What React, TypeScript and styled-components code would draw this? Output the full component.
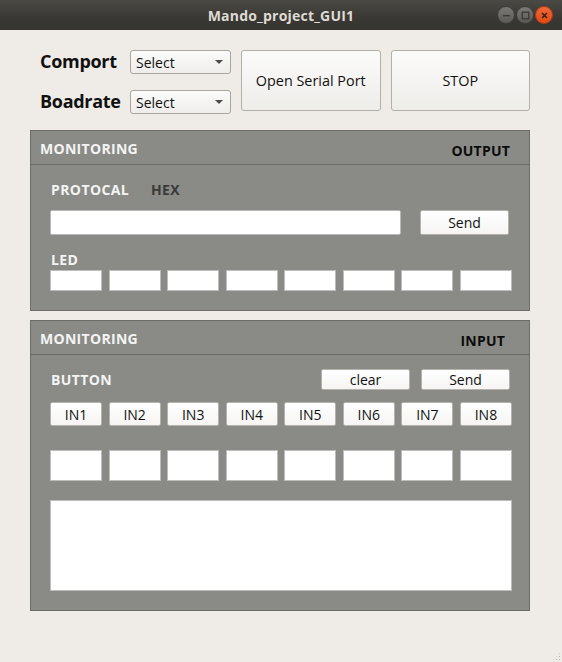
import React from "react";
import styled, { createGlobalStyle } from "styled-components";

const Global = createGlobalStyle`
  html, body { margin: 0; padding: 0; background: #efebe7; }
  body { font-family: "Open Sans", "DejaVu Sans", sans-serif; }
  * { box-sizing: border-box; }
`;

const Window = styled.div`
  width: 562px;
  height: 662px;
  background: #efebe7;
  display: flex;
  flex-direction: column;
  position: relative;
  overflow: hidden;
`;

const TitleBar = styled.div`
  height: 30px;
  flex: none;
  background: linear-gradient(#4a4944, #393834 60%, #353430);
  display: flex;
  align-items: center;
  justify-content: center;
  position: relative;
  color: #dfdbd2;
  font-weight: 700;
  font-size: 14px;
  letter-spacing: 0.2px;
`;

const WinButtons = styled.div`
  position: absolute;
  right: 9px;
  top: 6px;
  display: flex;
  gap: 1px;
`;

const WinBtn = styled.div<{ $close?: boolean }>`
  width: 18px;
  height: 18px;
  border-radius: 50%;
  background: ${(p) =>
    p.$close
      ? "linear-gradient(#f0683a, #df4b16)"
      : "linear-gradient(#7a7974, #5b5a56)"};
  border: 1px solid ${(p) => (p.$close ? "#b63c10" : "#3e3d3a")};
  display: flex;
  align-items: center;
  justify-content: center;
`;

const Content = styled.div`
  padding: 20px 32px 0 30px;
  display: flex;
  flex-direction: column;
`;

const TopRow = styled.div`
  display: flex;
  align-items: flex-start;
`;

const FormCol = styled.div`
  display: flex;
  flex-direction: column;
  gap: 16px;
  padding-left: 10px;
  padding-top: 0;
`;

const FormRow = styled.div`
  display: flex;
  align-items: center;
  height: 24px;
`;

const FieldLabel = styled.div`
  width: 90px;
  font-size: 18px;
  font-weight: 700;
  color: #111;
  letter-spacing: -0.3px;
  margin-top: -2px;
`;

const Combo = styled.div`
  width: 101px;
  height: 24px;
  border: 1px solid #a9a6a0;
  border-radius: 3px;
  background: linear-gradient(#fbfbfa, #efedeb);
  display: flex;
  align-items: center;
  justify-content: space-between;
  padding: 0 7px 0 5px;
  font-size: 14px;
  color: #111;
`;

const Arrow = styled.span`
  width: 0;
  height: 0;
  border-left: 4px solid transparent;
  border-right: 4px solid transparent;
  border-top: 4px solid #4c4c4c;
`;

const BigButton = styled.div`
  width: 141px;
  height: 61px;
  margin-left: 10px;
  border: 1px solid #b3b0aa;
  border-radius: 3px;
  background: linear-gradient(#fbfbfa, #efedea);
  display: flex;
  align-items: center;
  justify-content: center;
  font-size: 14.4px;
  color: #111;
`;

const Panel = styled.div<{ $mt: number; $h: number }>`
  margin-top: ${(p) => p.$mt}px;
  height: ${(p) => p.$h}px;
  background: #8a8b86;
  border: 1px solid #6c6d69;
  display: flex;
  flex-direction: column;
`;

const PanelHeader = styled.div<{ $pr: number }>`
  height: 34px;
  flex: none;
  border-bottom: 1px solid #6a6b67;
  display: flex;
  justify-content: space-between;
  padding: 0 ${(p) => p.$pr}px 0 9px;
`;

const HeaderTitle = styled.div`
  color: #f4f4f4;
  font-weight: 700;
  font-size: 14px;
  letter-spacing: 0.3px;
  padding-top: 8px;
`;

const HeaderTag = styled.div`
  color: #0c0c0c;
  font-weight: 700;
  font-size: 14px;
  letter-spacing: 0.2px;
  padding-top: 10px;
`;

const PanelBody = styled.div`
  padding: 0 19px 0 19px;
  display: flex;
  flex-direction: column;
`;

const SectionRow = styled.div<{ $mt: number }>`
  margin-top: ${(p) => p.$mt}px;
  display: flex;
  align-items: center;
  height: 20px;
`;

const SectionLabel = styled.div<{ $dark?: boolean; $w?: number }>`
  color: ${(p) => (p.$dark ? "#3a3a38" : "#f4f4f4")};
  font-weight: 700;
  font-size: 14px;
  letter-spacing: 0.4px;
  width: ${(p) => (p.$w ? `${p.$w}px` : "auto")};
  margin-left: 1px;
`;

const Spacer = styled.div`
  flex: 1;
`;

const InputRow = styled.div<{ $mt: number }>`
  margin-top: ${(p) => p.$mt}px;
  display: flex;
  align-items: center;
`;

const TextField = styled.div`
  width: 351px;
  height: 25px;
  background: #fff;
  border: 1px solid #b9b9b7;
  border-radius: 2px;
`;

const SmallButton = styled.div<{ $ml?: number; $h?: number }>`
  width: 89px;
  height: ${(p) => p.$h ?? 25}px;
  margin-left: ${(p) => p.$ml ?? 0}px;
  background: linear-gradient(#ffffff, #f6f5f4);
  border: 1px solid #b5b3ae;
  border-radius: 2px;
  display: flex;
  align-items: center;
  justify-content: center;
  font-size: 14px;
  color: #111;
`;

const Grid8 = styled.div<{ $mt: number }>`
  margin-top: ${(p) => p.$mt}px;
  width: 462px;
  display: grid;
  grid-template-columns: repeat(8, 1fr);
  column-gap: 6.4px;
`;

const Box = styled.div<{ $h: number }>`
  height: ${(p) => p.$h}px;
  background: #fff;
  border: 1px solid #bdbdbb;
`;

const InButton = styled.div`
  height: 24px;
  background: linear-gradient(#ffffff, #f6f5f4);
  border: 1px solid #b5b3ae;
  border-radius: 2px;
  display: flex;
  align-items: center;
  justify-content: center;
  font-size: 14px;
  color: #111;
`;

const TextArea = styled.div`
  margin-top: 19px;
  width: 462px;
  height: 91px;
  background: #fff;
  border: 1px solid #bdbdbb;
`;

const Grip = styled.div`
  position: absolute;
  right: 1px;
  bottom: 1px;
  width: 9px;
  height: 9px;
  background-image: radial-gradient(circle, #b9b6b0 0.8px, transparent 1px);
  background-size: 3px 3px;
  clip-path: polygon(100% 0, 100% 100%, 0 100%);
`;

const leds = Array.from({ length: 8 }, (_, i) => i);

export default function App() {
  return (
    <>
      <Global />
      <Window>
        <TitleBar>
          Mando_project_GUI1
          <WinButtons>
            <WinBtn>
              <svg width="9" height="9" viewBox="0 0 9 9">
                <rect x="1" y="4" width="7" height="1.4" fill="#3a3936" />
              </svg>
            </WinBtn>
            <WinBtn>
              <svg width="9" height="9" viewBox="0 0 9 9">
                <rect x="1.2" y="1.2" width="6.6" height="6.6" fill="none" stroke="#3a3936" strokeWidth="1.3" />
              </svg>
            </WinBtn>
            <WinBtn $close>
              <svg width="9" height="9" viewBox="0 0 9 9">
                <path d="M2 2 L7 7 M7 2 L2 7" stroke="#3a2010" strokeWidth="1.5" />
              </svg>
            </WinBtn>
          </WinButtons>
        </TitleBar>
        <Content>
          <TopRow>
            <FormCol>
              <FormRow>
                <FieldLabel>Comport</FieldLabel>
                <Combo>
                  Select
                  <Arrow />
                </Combo>
              </FormRow>
              <FormRow>
                <FieldLabel>Boadrate</FieldLabel>
                <Combo>
                  Select
                  <Arrow />
                </Combo>
              </FormRow>
            </FormCol>
            <BigButton>Open Serial Port</BigButton>
            <BigButton>STOP</BigButton>
          </TopRow>

          <Panel $mt={16} $h={181}>
            <PanelHeader $pr={19}>
              <HeaderTitle>MONITORING</HeaderTitle>
              <HeaderTag>OUTPUT</HeaderTag>
            </PanelHeader>
            <PanelBody>
              <SectionRow $mt={14}>
                <SectionLabel $w={99}>PROTOCAL</SectionLabel>
                <SectionLabel $dark>HEX</SectionLabel>
              </SectionRow>
              <InputRow $mt={11}>
                <TextField />
                <SmallButton $ml={19}>Send</SmallButton>
              </InputRow>
              <SectionRow $mt={14}>
                <SectionLabel>LED</SectionLabel>
              </SectionRow>
              <Grid8 $mt={1}>
                {leds.map((i) => (
                  <Box key={i} $h={21} />
                ))}
              </Grid8>
            </PanelBody>
          </Panel>

          <Panel $mt={9} $h={291}>
            <PanelHeader $pr={24}>
              <HeaderTitle>MONITORING</HeaderTitle>
              <HeaderTag>INPUT</HeaderTag>
            </PanelHeader>
            <PanelBody>
              <SectionRow $mt={14}>
                <SectionLabel>BUTTON</SectionLabel>
                <Spacer />
                <SmallButton $h={21}>clear</SmallButton>
                <SmallButton $h={21} $ml={11}>Send</SmallButton>
              </SectionRow>
              <Grid8 $mt={13}>
                {leds.map((i) => (
                  <InButton key={i}>IN{i + 1}</InButton>
                ))}
              </Grid8>
              <Grid8 $mt={24}>
                {leds.map((i) => (
                  <Box key={i} $h={31} />
                ))}
              </Grid8>
              <TextArea />
            </PanelBody>
          </Panel>
        </Content>
        <Grip />
      </Window>
    </>
  );
}
